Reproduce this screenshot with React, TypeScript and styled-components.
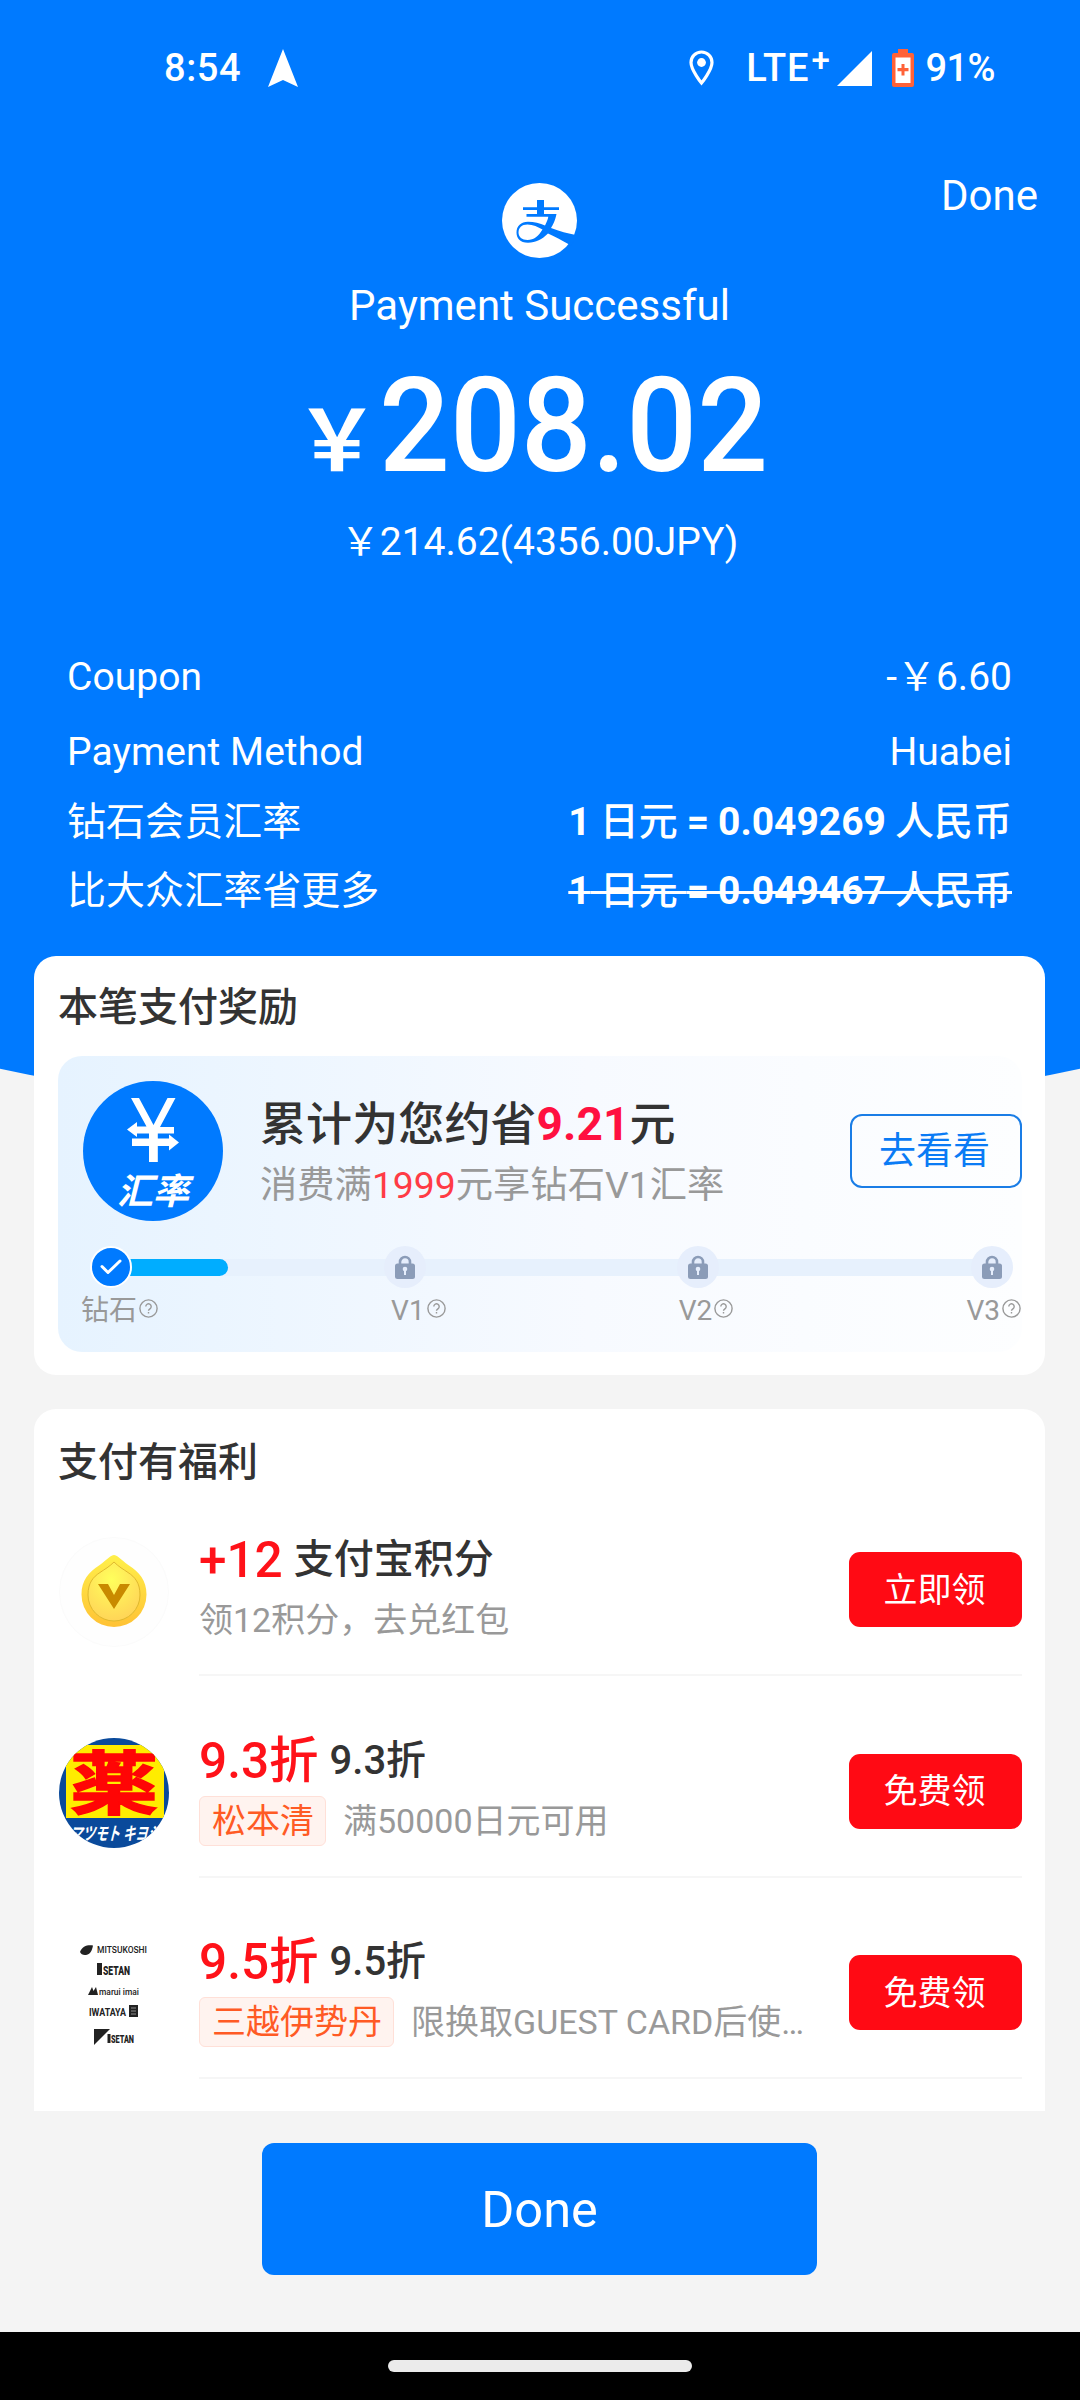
import React from 'react';
import styled, { createGlobalStyle } from 'styled-components';

const BLUE = '#007aff';

const GlobalStyle = createGlobalStyle`
  *, *::before, *::after { box-sizing: border-box; }
  body {
    margin: 0;
    background: #f4f4f4;
    font-family: Roboto, "Noto Sans CJK SC", sans-serif;
  }
  button { font-family: inherit; padding: 0; border: 0; }
  svg { display: block; flex: none; }
`;

const Screen = styled.div`
  position: relative;
  width: 1080px;
  height: 2400px;
  display: flex;
  flex-direction: column;
  overflow: hidden;
  background: #f4f4f4;
  isolation: isolate;
`;

const Backdrop = styled.div`
  position: absolute;
  inset: 0 0 auto 0;
  height: 1130px;
  z-index: -1;
  background: ${BLUE};
  clip-path: circle(2620px at 50% -1495px);
`;

const StatusBar = styled.div`
  display: flex;
  align-items: center;
  height: 136px;
  padding: 0 85px 0 164px;
  color: #fff;
  font-size: 38px;
  font-weight: 500;
`;

const Clock = styled.span`
  margin-right: 26px;
  letter-spacing: 0.6px;
`;

const StatusRight = styled.div`
  margin-left: auto;
  display: flex;
  align-items: center;
`;

const Network = styled.span`
  display: flex;
  margin: 0 6px 0 32px;
  line-height: 44px;
  letter-spacing: 0.9px;
`;

const NetworkPlus = styled.span`
  font-size: 33px;
  line-height: 30px;
  margin-left: 2px;
`;

const Battery = styled.span`
  margin-left: 12px;
  letter-spacing: -0.6px;
`;

const Header = styled.header`
  display: grid;
  grid-template-columns: 1fr auto 1fr;
  align-items: start;
  padding: 35px 42px 0 41px;
  height: 127px;
  color: #fff;
`;

const Logo = styled.div`
  grid-column: 2;
  margin-top: 12px;
`;

const HeaderLink = styled.a`
  justify-self: end;
  font-size: 42px;
  line-height: 50px;
`;

const Summary = styled.section`
  display: flex;
  flex-direction: column;
  align-items: center;
  padding: 13px 1px 0 0;
  color: #fff;
`;

const Status = styled.div`
  font-size: 42px;
  line-height: 60px;
`;

const Amount = styled.div`
  display: flex;
  align-items: baseline;
  height: 120px;
  margin-top: 30px;
  line-height: 120px;
  font-weight: 500;
`;

const Currency = styled.span`
  font-size: 84px;
  font-weight: 700;
`;

const Digits = styled.span`
  font-size: 132px;
  width: 405px;
  transform: scaleX(0.945);
  transform-origin: 0 50%;
`;

const Original = styled.div`
  margin-top: 31px;
  font-size: 39px;
  line-height: 50px;
`;

const Details = styled.dl`
  display: grid;
  grid-template-columns: 1fr auto;
  grid-template-rows: 78px 73px 67px 71px;
  align-items: center;
  margin: 70.5px 0 29.5px;
  padding: 0 68px 0 67px;
  color: #fff;
  font-size: 39px;
  line-height: 50px;
`;

const Term = styled.dt`
  letter-spacing: 0.05px;
`;

const Value = styled.dd<{ $strong?: boolean; $struck?: boolean }>`
  margin: 0;
  text-align: right;
  font-weight: ${(p) => (p.$strong ? 500 : 400)};
  word-spacing: ${(p) => (p.$strong ? -0.7 : 0)}px;
  text-decoration: ${(p) => (p.$struck ? 'line-through' : 'none')};
  text-decoration-thickness: 3px;
  & > b { font-weight: 700; }
`;

const Card = styled.section<{ $open?: boolean }>`
  width: 1011px;
  flex: none;
  margin-left: 34px;
  padding: ${(p) => (p.$open ? 33 : 31)}px 23px 0 24px;
  height: ${(p) => (p.$open ? 702 : 419)}px;
  margin-top: ${(p) => (p.$open ? 34 : 0)}px;
  background: #fff;
  border-radius: ${(p) => (p.$open ? '22px 22px 0 0' : '22px')};
  overflow: hidden;
`;

const CardTitle = styled.h2`
  margin: 0;
  height: 41px;
  font-size: 40px;
  line-height: 41px;
  font-weight: 500;
  color: #333;
`;

const Panel = styled.div`
  margin-top: 28px;
  height: 296px;
  padding: 25px 0 0 24px;
  border-radius: 24px;
  background: linear-gradient(90deg, #e6f3ff 0%, #f7faff 55%, #fdfeff 100%);
`;

const PanelHead = styled.div`
  display: flex;
  align-items: flex-start;
  height: 140px;
  padding-left: 1px;
`;

const RateBadge = styled.div`
  width: 140px;
  height: 140px;
  flex: none;
  border-radius: 50%;
  background: ${BLUE};
  display: flex;
  flex-direction: column;
  align-items: center;
  padding-top: 17px;
`;

const RateLabel = styled.span`
  margin-top: 3px;
  font-size: 36px;
  line-height: 50px;
  font-weight: 700;
  font-style: italic;
  color: #fff;
`;

const PanelText = styled.div`
  margin: 13px 0 0 37px;
`;

const Saved = styled.div`
  font-size: 46px;
  line-height: 61px;
  font-weight: 500;
  color: #333;
  letter-spacing: 0.1px;
`;

const SavedValue = styled.span`
  font-weight: 700;
  color: #ff1040;
`;

const Goal = styled.div`
  font-size: 37.3px;
  line-height: 61px;
  color: #999;
`;

const GoalValue = styled.span`
  color: #ff3b45;
`;

const LookButton = styled.button`
  align-self: center;
  margin-left: auto;
  width: 172px;
  height: 74px;
  padding: 0 3px 6px 0;
  border: 2px solid #1a7de6;
  border-radius: 12px;
  background: transparent;
  color: #0a7bf5;
  font-size: 37px;
`;

const Steps = styled.div`
  position: relative;
  display: flex;
  justify-content: space-between;
  margin: 25px 9px 0 8px;
  height: 42px;
`;

const Track = styled.div`
  position: absolute;
  left: 21px;
  right: 21px;
  top: 13px;
  height: 17px;
  border-radius: 9px;
  background: #e7f1fd;
`;

const Fill = styled.div`
  height: 100%;
  border-radius: 9px;
  background: #00adff;
`;

const StepDot = styled.div<{ $done?: boolean }>`
  position: relative;
  width: 42px;
  height: 42px;
  display: flex;
  align-items: center;
  justify-content: center;
  border-radius: 50%;
  border: ${(p) => (p.$done ? '2px solid #fff' : '0')};
  background: ${(p) => (p.$done ? BLUE : '#e6eefc')};
`;

const StepLabels = styled.div`
  display: flex;
  justify-content: space-between;
  margin: 3px 1px 0 -1px;
  height: 40px;
`;

const StepLabel = styled.div`
  display: flex;
  gap: 2px;
  font-size: 28px;
  line-height: 40px;
  color: #999;
  & > svg { margin-top: 8px; }
`;

const OfferList = styled.div`
  display: flex;
  flex-direction: column;
  gap: 6.5px;
  margin-top: -2px;
`;

const Offer = styled.article`
  display: flex;
  height: 195px;
  padding-left: 1px;
`;

const OfferIcon = styled.div`
  width: 110px;
  height: 110px;
  margin: 55.5px 30px 0 0;
`;

const OfferBody = styled.div`
  flex: 1;
  display: flex;
  align-items: flex-start;
  border-bottom: 2px solid #f6f6f6;
`;

const OfferText = styled.div<{ $tagged: boolean }>`
  flex: 1;
  padding-top: ${(p) => (p.$tagged ? 47 : 48)}px;
`;

const OfferLine = styled.div`
  display: flex;
  height: 60px;
  line-height: 62px;
  font-size: 40px;
  font-weight: 500;
  color: #333;
`;

const Benefit = styled.span`
  margin-right: 11px;
  font-size: 49.5px;
  line-height: 62px;
  color: #ff1219;
`;

const OfferNote = styled.div<{ $tagged: boolean }>`
  display: flex;
  align-items: center;
  height: 50px;
  margin-top: 6px;
  font-size: 34px;
  line-height: 48px;
  color: #999;
  white-space: nowrap;
`;

const Tag = styled.span`
  height: 50px;
  padding: 0 11px 0 12px;
  margin-right: 17px;
  border: 1px solid #ffe0d8;
  border-radius: 6px;
  background: #fff3ef;
  color: #ff5a24;
`;

const ClaimButton = styled.button`
  width: 173px;
  height: 75px;
  margin-top: 71px;
  padding: 0 2px 5px 0;
  border-radius: 11px;
  background: #ff0a14;
  color: #fff;
  font-size: 34px;
`;

const Footer = styled.footer`
  flex: 1;
  display: flex;
  justify-content: center;
  align-items: flex-start;
  padding: 32px 1px 0 0;
  background: #f4f4f4;
`;

const DoneButton = styled.button`
  width: 555px;
  height: 132px;
  border-radius: 12px;
  background: ${BLUE};
  color: #fff;
  font-size: 50.5px;
`;

const NavBar = styled.div`
  height: 68px;
  display: flex;
  align-items: center;
  justify-content: center;
  background: #000;
`;

const NavPill = styled.div`
  width: 304px;
  height: 12px;
  border-radius: 6px;
  background: #ebebeb;
`;

const AlipayMark = () => (
  <svg width="75" height="75" viewBox="0 0 75 75">
    <circle cx="37.500" cy="37.500" r="37.500" fill="#fff" />
    <path
      fill={BLUE}
      fillRule="evenodd"
      d="M35 17H42V24.300H57V27H42V31H54.500C53 38 51 42 49 45C58 48.500 66 50.500 76 52.500L69 62.500C60 57.500 53 53.500 46 50.500C40 56.500 34 59.700 26 59.700C18 59.700 14.500 55 14.500 49.500C14.500 43 19 38.800 26 38.800C32 38.800 38 40.500 43 42.500C44.500 39.500 45.800 36.500 46.300 33.700H24.500V31H35V27H21V24.300H35ZM40.500 46.500C36 44 31 41.500 25.500 41.500C19.500 41.500 16.500 45 16.500 49.500C16.500 54 20 57 25.500 57C32 57 36.500 53 40.500 46.500Z"
    />
  </svg>
);

const NavigationArrow = () => (
  <svg width="32" height="38" viewBox="0 0 32 38">
    <path d="M16 0 31 38 16 31 1 38Z" fill="#fff" />
  </svg>
);

const Pin = () => (
  <svg width="25" height="36" viewBox="0 0 25 36">
    <path d="M12.5 2C6.5 2 2 6.6 2 12.5 2 20 12.500 33 12.5 33S23 20 23 12.500C23 6.600 18.500 2 12.500 2Z" fill="none" stroke="#fff" strokeWidth="3.2" />
    <circle cx="12.500" cy="12.500" r="4.400" fill="#fff" />
  </svg>
);

const Signal = () => (
  <svg width="35" height="35" viewBox="0 0 35 35">
    <path d="M35 0V35H0Z" fill="#fff" />
  </svg>
);

const BatteryShape = styled.svg`
  margin-left: 20px;
`;

const BatteryIcon = () => (
  <BatteryShape width="22" height="38" viewBox="0 0 22 38">
    <path d="M6 0H16V4H20a2 2 0 0 1 2 2V36a2 2 0 0 1-2 2H2a2 2 0 0 1-2-2V6a2 2 0 0 1 2-2H6Z" fill="#ff6238" />
    <path d="M3.500 8.500H18.500V34H3.500Z" fill="#fff" />
    <path d="M9.500 15H12.500V19H16.500V22.200H12.500V26.500H9.500V22.200H5.500V19H9.500Z" fill="#ff6238" />
  </BatteryShape>
);

const ExchangeYen = () => (
  <svg width="54" height="66" viewBox="0 0 54 66" fill="#fff">
    <path d="M5 0H13L27.500 27 41.500 0H49.500L34 29H48V35.500H31.800V40.500H43V36.500L53 44.500 43 52.500V48H31.800V64H23V48H6V40.500H23V35.500H11V39L1 31.500 11 24V28.500H20.500Z" />
  </svg>
);

const Check = () => (
  <svg width="24" height="18" viewBox="0 0 24 18">
    <path d="M3 8.500 9 14.500 21 3" fill="none" stroke="#fff" strokeWidth="3" strokeLinecap="round" strokeLinejoin="round" />
  </svg>
);

const Lock = () => (
  <svg width="22" height="24" viewBox="0 0 22 24">
    <path d="M6 10V7a5 5 0 0 1 10 0V10" fill="none" stroke="#8b9cb8" strokeWidth="2.600" />
    <rect x="1" y="8.500" width="20" height="15.500" rx="2.500" fill="#8b9cb8" />
    <circle cx="11" cy="14" r="2.300" fill="#e6eefc" />
    <path d="M10 14H12V20H10Z" fill="#e6eefc" />
  </svg>
);

const Help = () => (
  <svg width="19" height="19" viewBox="0 0 19 19" fill="none" stroke="#999" strokeWidth="1.400">
    <circle cx="9.500" cy="9.500" r="8.600" />
    <path d="M6.800 7.600a2.700 2.700 0 1 1 4.200 2.200c-1 .7-1.500 1-1.500 2M9.500 13v1.600" />
  </svg>
);

const PointsCoin = () => (
  <svg width="110" height="110" viewBox="0 0 110 110">
    <defs>
      <radialGradient id="coinFace" cx="0.45" cy="0.3" r="0.75">
        <stop offset="0" stopColor="#ffff5c" />
        <stop offset="1" stopColor="#ffd257" />
      </radialGradient>
      <linearGradient id="coinEdge" x1="0" y1="0" x2="0" y2="1">
        <stop offset="0" stopColor="#fff04a" />
        <stop offset="1" stopColor="#ffc235" />
      </linearGradient>
    </defs>
    <circle cx="55" cy="55" r="54.500" fill="#fefefe" stroke="#fbfbfb" />
    <path d="M55 18C52 18 49 22 40 28.500 30 35 22.500 43 22.500 57.500a32.500 32.500 0 0 0 65 0C87.500 43 80 35 70 28.500 61 22 58 18 55 18Z" fill="url(#coinEdge)" />
    <path d="M55 25C50 30 46 32 41 35.500 34 40 29 46 29 58a26 26 0 0 0 52 0C81 46 76 40 69 35.500 64 32 60 30 55 25Z" fill="url(#coinFace)" stroke="#dfb92e" strokeWidth="1" />
    <path d="M39 47H49L55 58 61 47H71L55 72Z" fill="#c98a00" />
  </svg>
);

const DrugstoreLogo = () => (
  <svg width="110" height="110" viewBox="0 0 110 110">
    <defs>
      <clipPath id="drugstoreClip">
        <circle cx="55" cy="55" r="55" />
      </clipPath>
    </defs>
    <g clipPath="url(#drugstoreClip)">
      <rect width="110" height="110" fill="#0a4a9b" />
      <rect x="7" y="7" width="98" height="73" fill="#ffec00" />
      <text transform="translate(55 70.500) scale(1.290 1)" textAnchor="middle" fontFamily="Noto Sans CJK JP, sans-serif" fontWeight="700" fontSize="69" fill="#ff0505" stroke="#ff0505" strokeWidth="1.500">薬</text>
      <text transform="translate(56 102) skewX(-14)" textAnchor="middle" textLength="90" lengthAdjust="spacingAndGlyphs" fontFamily="Noto Sans CJK JP, sans-serif" fontWeight="700" fontSize="18" fill="#fff">マツモト キヨシ</text>
    </g>
  </svg>
);

const DepartmentLogos = () => (
  <svg width="110" height="110" viewBox="0 3 110 110" fill="#222" fontFamily="Roboto, sans-serif">
    <path d="M21 15C23 9 29 7.500 34 8.500 33 13 32 17 27 18 24 18.500 22 17 21 15Z" />
    <text x="38" y="15.500" fontSize="8.500" fontWeight="500" textLength="50" lengthAdjust="spacingAndGlyphs">MITSUKOSHI</text>
    <rect x="38" y="26" width="5" height="12" />
    <text x="44" y="38" fontSize="12" fontWeight="900" textLength="27" lengthAdjust="spacingAndGlyphs">SETAN</text>
    <path d="M29 58 33 50 34.500 54 37 50 39 58Z" />
    <text x="40" y="58" fontSize="9" fontWeight="500" textLength="40" lengthAdjust="spacingAndGlyphs">marui imai</text>
    <text x="30" y="78.500" fontSize="10" fontWeight="700" textLength="37" lengthAdjust="spacingAndGlyphs">IWATAYA</text>
    <rect x="70" y="68" width="9" height="12" />
    <path d="M72 71H77M72 74H77M72 77H77" stroke="#aaa" strokeWidth="0.800" />
    <path d="M35 92H51L35 108Z" />
    <rect x="48.500" y="97" width="3" height="9" />
    <text x="52" y="106" fontSize="10.500" fontWeight="900" textLength="23" lengthAdjust="spacingAndGlyphs">SETAN</text>
  </svg>
);

type OfferData = {
  benefit: string;
  title: string;
  tag?: string;
  note: string;
  action: string;
  icon: React.ReactNode;
};

const offers: OfferData[] = [
  { benefit: '+12', title: '支付宝积分', note: '领12积分，去兑红包', action: '立即领', icon: <PointsCoin /> },
  { benefit: '9.3折', title: '9.3折', tag: '松本清', note: '满50000日元可用', action: '免费领', icon: <DrugstoreLogo /> },
  { benefit: '9.5折', title: '9.5折', tag: '三越伊势丹', note: '限换取GUEST CARD后使…', action: '免费领', icon: <DepartmentLogos /> },
];

const levels = ['钻石', 'V1', 'V2', 'V3'];
const progress = 0.133;

export default function App() {
  return (
    <Screen>
      <GlobalStyle />
      <Backdrop />
      <StatusBar>
        <Clock>8:54</Clock>
        <NavigationArrow />
        <StatusRight>
          <Pin />
          <Network>
            LTE<NetworkPlus>+</NetworkPlus>
          </Network>
          <Signal />
          <BatteryIcon />
          <Battery>91%</Battery>
        </StatusRight>
      </StatusBar>

      <Header>
        <Logo>
          <AlipayMark />
        </Logo>
        <HeaderLink>Done</HeaderLink>
      </Header>

      <Summary>
        <Status>Payment Successful</Status>
        <Amount>
          <Currency>￥</Currency>
          <Digits>208.02</Digits>
        </Amount>
        <Original>￥214.62(4356.00JPY)</Original>
      </Summary>

      <Details>
        <Term>Coupon</Term>
        <Value>-￥6.60</Value>
        <Term>Payment Method</Term>
        <Value>Huabei</Value>
        <Term>钻石会员汇率</Term>
        <Value $strong>
          <b>1</b> 日元 <b>= 0.049269</b> 人民币
        </Value>
        <Term>比大众汇率省更多</Term>
        <Value $strong $struck>
          <b>1</b> 日元 <b>= 0.049467</b> 人民币
        </Value>
      </Details>

      <Card>
        <CardTitle>本笔支付奖励</CardTitle>
        <Panel>
          <PanelHead>
            <RateBadge>
              <ExchangeYen />
              <RateLabel>汇率</RateLabel>
            </RateBadge>
            <PanelText>
              <Saved>
                累计为您约省<SavedValue>9.21</SavedValue>元
              </Saved>
              <Goal>
                消费满<GoalValue>1999</GoalValue>元享钻石V1汇率
              </Goal>
            </PanelText>
            <LookButton>去看看</LookButton>
          </PanelHead>
          <Steps>
            <Track>
              <Fill style={{ width: `${progress * 100}%` }} />
            </Track>
            {levels.map((level, i) => (
              <StepDot key={level} $done={i === 0}>
                {i === 0 ? <Check /> : <Lock />}
              </StepDot>
            ))}
          </Steps>
          <StepLabels>
            {levels.map((level) => (
              <StepLabel key={level}>
                {level}
                <Help />
              </StepLabel>
            ))}
          </StepLabels>
        </Panel>
      </Card>

      <Card $open>
        <CardTitle>支付有福利</CardTitle>
        <OfferList>
          {offers.map((o) => (
            <Offer key={o.benefit}>
              <OfferIcon>{o.icon}</OfferIcon>
              <OfferBody>
                <OfferText $tagged={!!o.tag}>
                  <OfferLine>
                    <Benefit>{o.benefit}</Benefit>
                    {o.title}
                  </OfferLine>
                  <OfferNote $tagged={!!o.tag}>
                    {o.tag && <Tag>{o.tag}</Tag>}
                    {o.note}
                  </OfferNote>
                </OfferText>
                <ClaimButton>{o.action}</ClaimButton>
              </OfferBody>
            </Offer>
          ))}
        </OfferList>
      </Card>

      <Footer>
        <DoneButton>Done</DoneButton>
      </Footer>
      <NavBar>
        <NavPill />
      </NavBar>
    </Screen>
  );
}
